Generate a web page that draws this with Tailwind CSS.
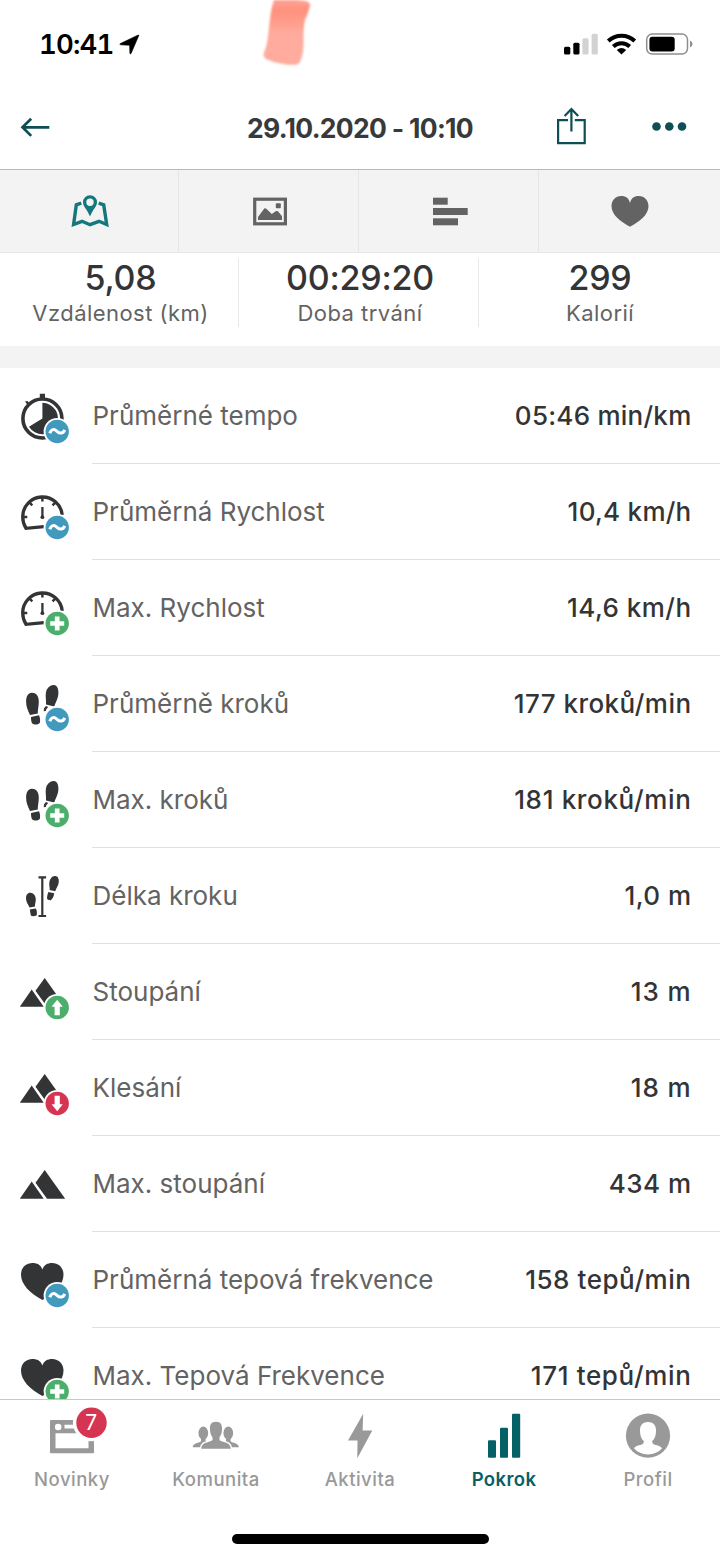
<!DOCTYPE html>
<html lang="cs" class="bg-white">
<head>
  <meta charset="UTF-8">
  <title>Trénink 29.10.2020</title>
  <meta name="viewport" content="width=device-width,initial-scale=1.0">
  <script src="https://cdn.jsdelivr.net/npm/@tailwindcss/browser@4"></script>
</head>
<body class="relative flex h-[1559px] w-[720px] flex-col overflow-hidden bg-white font-['Inter','Noto_Sans',sans-serif] text-[#333436]">
  <!-- marker stroke over the status bar -->
  <svg class="absolute left-[255px] top-0 blur-[0.8px]" width="64" height="72" viewBox="255 0 64 72">
    <defs>
      <linearGradient id="smear" x1="0" y1="0" x2="0" y2="1">
        <stop offset="0" stop-color="#ffa899"/>
        <stop offset=".2" stop-color="#ff917e"/>
        <stop offset=".42" stop-color="#ffa090"/>
        <stop offset=".5" stop-color="#ffaa9c"/>
        <stop offset="1" stop-color="#ffada0"/>
      </linearGradient>
    </defs>
    <path fill="url(#smear)" d="M275-3 305 1q6 1 5 5-2 8-5 14c-3 12 0 26-3 36-1 5-3 9-7 9-10 0-20-2-29-6-3-2-3-5-1-9 5-12 3-36 10-53z"/>
  </svg>

  <header class="h-[170px] shrink-0 border-b border-[#b9b9b9]">
    <div class="flex h-[88px] items-center justify-between pl-[39px] pr-[27px]">
      <div class="flex items-center">
        <span class="w-[80px] pt-[2px] text-[27.5px] font-semibold leading-none text-black tabular-nums tracking-[-0.8px]">10:41</span>
        <svg width="21" height="21" viewBox="119.5 33.5 21 21"><path d="M138.600 34.600q1-.3.6.7l-7.600 17.600q-.8 1.200-1.200-.2l-.3-7.900-9-.5q-1.600-.5-.2-1.200z" stroke="#000" stroke-width=".6"/></svg>
      </div>
      <svg width="130" height="24" viewBox="563 32 130 24">
        <rect x="564" y="46.700" width="6.300" height="7.700" rx="1.500"/>
        <rect x="573.300" y="42.700" width="6.200" height="11.700" rx="1.500"/>
        <rect x="582.400" y="38.300" width="6.200" height="16.100" rx="1.500" fill="#d2d2d2"/>
        <rect x="591.600" y="33.700" width="6.200" height="20.700" rx="1.500" fill="#d2d2d2"/>
        <g fill="none" stroke="#000" stroke-width="4">
          <path d="M608.300 41a19 19 0 0 1 26.400 0"/>
          <path d="M613.300 46.500a12 12 0 0 1 16.400 0"/>
        </g>
        <path d="M616.800 50q4.700-3.800 9.400 0l-4.700 4.600z"/>
        <rect x="646.700" y="34.100" width="40.800" height="20" rx="5.500" fill="none" stroke="#8e8e8e" stroke-width="1.500"/>
        <rect x="649.400" y="36.700" width="25.300" height="14.800" rx="3"/>
        <path d="M690 40.500q2.500 1 2.500 3.500t-2.500 3.500z" fill="#8e8e8e"/>
      </svg>
    </div>
    <div class="flex h-[81px] items-center justify-between">
      <svg class="shrink-0" width="180" height="81" viewBox="0 88 180 81"><path d="M49.300 127.300H22.500M31.200 118.700l-8.700 8.600 8.700 8.600" fill="none" stroke="#0d4f55" stroke-width="2.700"/></svg>
      <h1 class="whitespace-nowrap text-[26.5px] font-bold leading-none tracking-[-0.7px] text-[#38393b]">29.10.2020 - 10:10</h1>
      <svg class="shrink-0" width="180" height="81" viewBox="540 88 180 81">
        <path d="M568 120.100h-9.900v23h26.600v-23h-9.900M571.400 131.500v-22M564.600 116l6.800-6.900 6.800 6.900" fill="none" stroke="#0d4f55" stroke-width="2.200"/>
        <g fill="#0d4f55"><circle cx="656.500" cy="126.500" r="4.300"/><circle cx="669.300" cy="126.500" r="4.300"/><circle cx="682" cy="126.500" r="4.300"/></g>
      </svg>
    </div>
  </header>

  <!-- section tabs -->
  <nav class="grid h-[83px] shrink-0 grid-cols-[179px_180px_180px_181px] border-b border-[#e6e6e6] bg-[#f3f3f3]">
    <svg class="h-[82px] w-full border-r border-[#e6e6e6]" viewBox="0 170 178 82">
      <path d="M81.300 203.200 76.300 204.800 73.600 224.500 82 221.300l8 3.400 9-3.400 7.700 3.200-3-19.700-5-1.600" fill="none" stroke="#13777b" stroke-width="3.400"/>
      <path fill="#13777b" fill-rule="evenodd" d="M90 195.200a7 7 0 0 0-7 7c0 4.500 4 6.500 7 14.300 3-7.800 7-9.800 7-14.300a7 7 0 0 0-7-7zm0 3.300a3.700 3.700 0 1 1 0 7.400 3.700 3.700 0 0 1 0-7.400z"/>
    </svg>
    <svg class="h-[82px] w-full border-r border-[#e6e6e6]" viewBox="179 170 179 82">
      <rect x="254.700" y="199.200" width="30.700" height="24.600" fill="none" stroke="#636363" stroke-width="3.200"/>
      <path fill="#636363" d="M258 220v-3l6.500-8.800 1.500.3 5.800 5.500 4.200-3 2 .2 4 5v3.800z"/>
      <rect x="275.800" y="203.300" width="5" height="5" rx="1" fill="#636363"/>
    </svg>
    <svg class="h-[82px] w-full border-r border-[#e6e6e6]" viewBox="359 170 179 82" fill="#636363">
      <rect x="433" y="197.700" width="14.700" height="7"/>
      <rect x="433" y="208" width="34.700" height="7"/>
      <rect x="433" y="218.300" width="25" height="7"/>
    </svg>
    <svg class="h-[82px] w-full" viewBox="539 170 181 82">
      <path fill="#636363" d="M630 203c1-4.500 4-7 8.700-7 6 0 9.800 4.500 9.800 10.300 0 8.500-9 15.500-18.500 20.400-9.500-4.900-18.500-11.900-18.500-20.400 0-5.800 3.800-10.300 9.800-10.300 4.700 0 7.700 2.500 8.700 7z"/>
    </svg>
  </nav>

  <section class="grid h-[93px] shrink-0 grid-cols-[239px_240px_241px] items-start pt-[5px] text-center">
    <div class="h-[69px] border-r border-[#e8e8e8] pl-[3px]">
      <div class="text-[34px] font-medium leading-[40px] tracking-[-0.2px]">5,08</div>
      <div class="text-[22px] leading-[30px] tracking-[0.45px] text-[#636363]">Vzdálenost (km)</div>
    </div>
    <div class="h-[69px] border-r border-[#e8e8e8] pl-[3px]">
      <div class="text-[34px] font-medium leading-[40px] tracking-[-0.2px]">00:29:20</div>
      <div class="text-[22px] leading-[30px] tracking-[0.45px] text-[#636363]">Doba trvání</div>
    </div>
    <div class="h-[69px] pl-px">
      <div class="text-[34px] font-medium leading-[40px] tracking-[-0.2px]">299</div>
      <div class="text-[22px] leading-[30px] tracking-[0.45px] text-[#636363]">Kalorií</div>
    </div>
  </section>
  <div class="h-[22px] shrink-0 bg-[#f3f3f3]"></div>

  <main id="stats" class="h-[1031px] shrink-0 overflow-hidden"></main>

  <footer class="flex h-[160px] shrink-0 flex-col border-t border-[#c8c8c8] bg-white">
    <div class="grid grid-cols-5 text-center text-[18.5px] font-medium leading-[24px] tracking-[0.5px] text-[#999999]">
      <div>
        <svg width="144" height="67" viewBox="0 1400 144 67">
          <path fill="#999" fill-rule="evenodd" d="M51 1420h42q1 0 1 1v31.300q0 1-1 1H51q-1 0-1-1V1421q0-1 1-1zm4.500 13.300v14.900h33v-14.900zm9-8.500v3.700H80v-3.700zm-6.300-1.100a3.300 3.300 0 1 0 0 6.600 3.300 3.300 0 0 0 0-6.600z"/>
          <circle cx="91.500" cy="1422.700" r="18.600" fill="#fff"/>
          <circle cx="91.500" cy="1422.700" r="15.200" fill="#d63552"/>
          <text x="91.300" y="1430" fill="#fff" font-size="21" font-weight="400" letter-spacing="0" text-anchor="middle">7</text>
        </svg>
        <span>Novinky</span>
      </div>
      <div>
        <svg width="144" height="67" viewBox="144 1400 144 67" fill="#999">
          <g id="side">
            <ellipse cx="203.300" cy="1433.200" rx="4.800" ry="6.600"/>
            <path d="M201 1438v3.200c-2 2-8 1.500-8.300 6h9.800c1.500-2.500 4-3 6-4l-3-2.500v-2.700z"/>
          </g>
          <use href="#side" transform="matrix(-1 0 0 1 431.600 0)"/>
          <path stroke="#fff" stroke-width="3" paint-order="stroke" d="M216 1421.700c5 0 6.300 3 6 8-.3 4-1.300 6-2.500 7.500v2.800c3 3 11 1.500 11.300 8.800h-29.600c.3-7.300 8.300-5.800 11.300-8.800v-2.800c-1.200-1.500-2.200-3.500-2.500-7.500-.3-5 1-8 6-8z"/>
        </svg>
        <span>Komunita</span>
      </div>
      <div>
        <svg width="144" height="67" viewBox="288 1400 144 67" fill="#999"><path d="M363.200 1413.700 348 1440.400h9.500l-.2 17.800 15-27.700h-9.700z"/></svg>
        <span>Aktivita</span>
      </div>
      <div>
        <svg width="144" height="67" viewBox="432 1400 144 67" fill="#066166">
          <rect x="488" y="1440.300" width="8" height="17.500" rx="1"/>
          <rect x="500" y="1427.700" width="8" height="30.100" rx="1"/>
          <rect x="512" y="1413.700" width="8.200" height="44.100" rx="1"/>
        </svg>
        <span class="font-semibold tracking-[0.4px] text-[#0b5f63]">Pokrok</span>
      </div>
      <div>
        <svg width="144" height="67" viewBox="576 1400 144 67">
          <circle cx="648" cy="1435.700" r="22.100" fill="#999"/>
          <path fill="#fff" d="M648 1422c6 0 8.300 4 8 9.500-.2 4-1.300 7.500-3.700 9.500v2c1.500 2.500 8 2 9.700 5.300-3.500 4-8.500 6.200-14 6.200s-10.500-2.200-14-6.200c1.700-3.300 8.200-2.800 9.700-5.300v-2c-2.400-2-3.500-5.500-3.700-9.500-.3-5.500 2-9.500 8-9.500z"/>
        </svg>
        <span>Profil</span>
      </div>
    </div>
    <div class="mx-auto mt-[43px] h-[10px] w-[257px] rounded-full bg-black"></div>
  </footer>

  <script>
    // each icon is drawn on the 72x96 cell at the start of a row
    const gauge = `
      <g fill="none" stroke="#333436">
        <path d="M44 62.600 26 64.300Q22.700 59 22.700 52.700A19.800 19.800 0 0 1 62.200 50.800" stroke-width="3.300"/>
        <path d="M42.400 32v5.500M29.800 38.800l2.500 2.500M55 38.800l-2.500 2.500M23 53h4.300" stroke-width="2.500"/>
        <path d="M42.400 43v10" stroke-width="2.300"/>
      </g>
      <circle cx="42.400" cy="53.200" r="1.900" fill="#333436"/>`;
    const feet = `
      <path d="M31.700 36.800c4-.3 7.100 3 7.100 8.700.1 4-1.100 8-1 12l-7.800 1.400C28 55 26 50.500 26.100 45.500c0-5 2-8.500 5.600-8.700zM31 60.900l8-1.600c1.200 2.500 1.400 5.300.8 7.700-2.500 2-5.800 2-7.800.2-.8-2-1-4-1-6.300z"/>
      <path d="M53.800 29c3.600.3 4.900 4.300 4.600 9-.3 4.500-2.900 8.500-4.200 12.500l-8.200-2c.3-4.200-.6-7-.2-11 .5-5.200 4.200-8.800 8-8.500zM43.800 55.300c-.2-2.700.8-4 2.200-5.200l2.200.9c-1.200 1.200-2.100 2.500-2.400 3.900z"/>`;
    const strideFeet = `
      <path d="M30.300 44.700c3.300 0 5.500 3 5.500 6.800 0 2.500-1 4.500-.8 7l-5.500 1c-1.300-3-3.500-5.500-3.500-9 0-3.200 1.300-5.800 4.300-5.800zM29.800 61.500l6-1c1.200 2 1.300 4.200.9 6.700-2.200 1.300-4.400 1.300-5.900.2z"/>
      <path d="M55.200 28.100c2.700.2 3.800 2.700 3.600 5.900-.3 3.500-2.600 6-3.600 9.200l-5.600-1.200c.3-2.500-.6-4.500-.3-7.200.5-4 2.900-6.900 5.900-6.700zM48.400 44l5.800 1.300c-.3 3-1.300 5.200-3.400 6.900-2 .2-3.200-.6-3.800-1.700.1-2.500.6-4.500 1.400-6.500z"/>
      <path d="M42.300 29.300v38.700M38.500 29.300h7.600M38.500 68h7.600" fill="none" stroke="#333436" stroke-width="2.200"/>`;
    const peaks = `<path d="M19.800 62.700 31.700 45.500 43.700 62.700zM35.500 46.800 44.700 34 65.200 62.700H47z"/>`;
    const heart = `<path d="M42.400 37.500c1.500-4.500 5-6.500 9.800-6.500 6.700 0 11.300 5 11.300 11.500 0 10-8.500 18.500-21.100 25.500C29.800 61 21 52.500 21 42.500 21 36 25.600 31 32.500 31c4.800 0 8.400 2 9.900 6.500z"/>`;
    const timer = `
      <circle cx="42.400" cy="50.500" r="19.500" fill="none" stroke="#333436" stroke-width="3.600"/>
      <path d="M42.400 50.500V34.800a15.700 15.700 0 1 1-13.400 24zM39.800 25.700h5.200v5h-5.200zM25 33.500l2.500-.5 2.800 3.200-2 1.800z"/>`;

    const ring = `<circle cx="57.200" cy="63.500" r="13.600" fill="#fff"/>`;
    const badges = {
      avg: ring + `<circle cx="57.200" cy="63.500" r="11.700" fill="#4299be"/><path d="M49.800 65.300c1.700-4.600 4.500-4.500 7.200-2s5.900 2.800 7.700-1.500" fill="none" stroke="#fff" stroke-width="3"/>`,
      max: ring + `<circle cx="57.200" cy="63.500" r="11.700" fill="#4bae6b"/><path d="M57.200 56.500v14M50.200 63.500h14" fill="none" stroke="#fff" stroke-width="4.700"/>`,
      up: ring + `<circle cx="57.200" cy="63.500" r="11.700" fill="#4bae6b"/><path d="M57.200 55.700l5.600 7h-3v8.600h-5.200v-8.600h-3z" fill="#fff"/>`,
      down: ring + `<circle cx="57.200" cy="63.500" r="11.700" fill="#d63552"/><path d="M57.200 71.300l5.600-7h-3v-8.600h-5.200v8.600h-3z" fill="#fff"/>`,
    };

    const rows = [
      [timer, 'avg', 'Průměrné tempo', '05:46 min/km', 'tracking-[0.25px]'],
      [gauge, 'avg', 'Průměrná Rychlost', '10,4 km/h', 'tracking-[0.25px]'],
      [gauge, 'max', 'Max. Rychlost', '14,6 km/h', 'tracking-[0.45px]'],
      [feet, 'avg', 'Průměrně kroků', '177 kroků/min', 'tracking-[0.45px]'],
      [feet, 'max', 'Max. kroků', '181 kroků/min', 'tracking-[0.65px]'],
      [strideFeet, '', 'Délka kroku', '1,0 m', 'tracking-[0.45px]'],
      [peaks, 'up', 'Stoupání', '13 m', 'tracking-[0.9px]'],
      [peaks, 'down', 'Klesání', '18 m', 'tracking-[0.9px]'],
      [peaks, '', 'Max. stoupání', '434 m', 'tracking-[0.45px]'],
      [heart, 'avg', 'Průměrná tepová frekvence', '158 tepů/min', 'tracking-[0.55px]'],
      [heart, 'max', 'Max. Tepová Frekvence', '171 tepů/min', 'tracking-[0.65px]'],
    ];

    document.getElementById('stats').innerHTML = rows.map(([icon, badge, label, value, tracking]) => `
      <div class="flex h-[96px]">
        <svg class="mr-[20px] shrink-0" width="72" height="96" viewBox="0 0 72 96" fill="#333436">${icon}${badges[badge] || ''}</svg>
        <div class="flex flex-1 items-center justify-between border-b border-[#e0e0e0] pl-[0.5px] pr-[28.5px] text-[26px] leading-none">
          <span class="text-[#636363]">${label}</span>
          <span class="font-medium ${tracking}">${value}</span>
        </div>
      </div>`).join('');
  </script>
</body>
</html>
